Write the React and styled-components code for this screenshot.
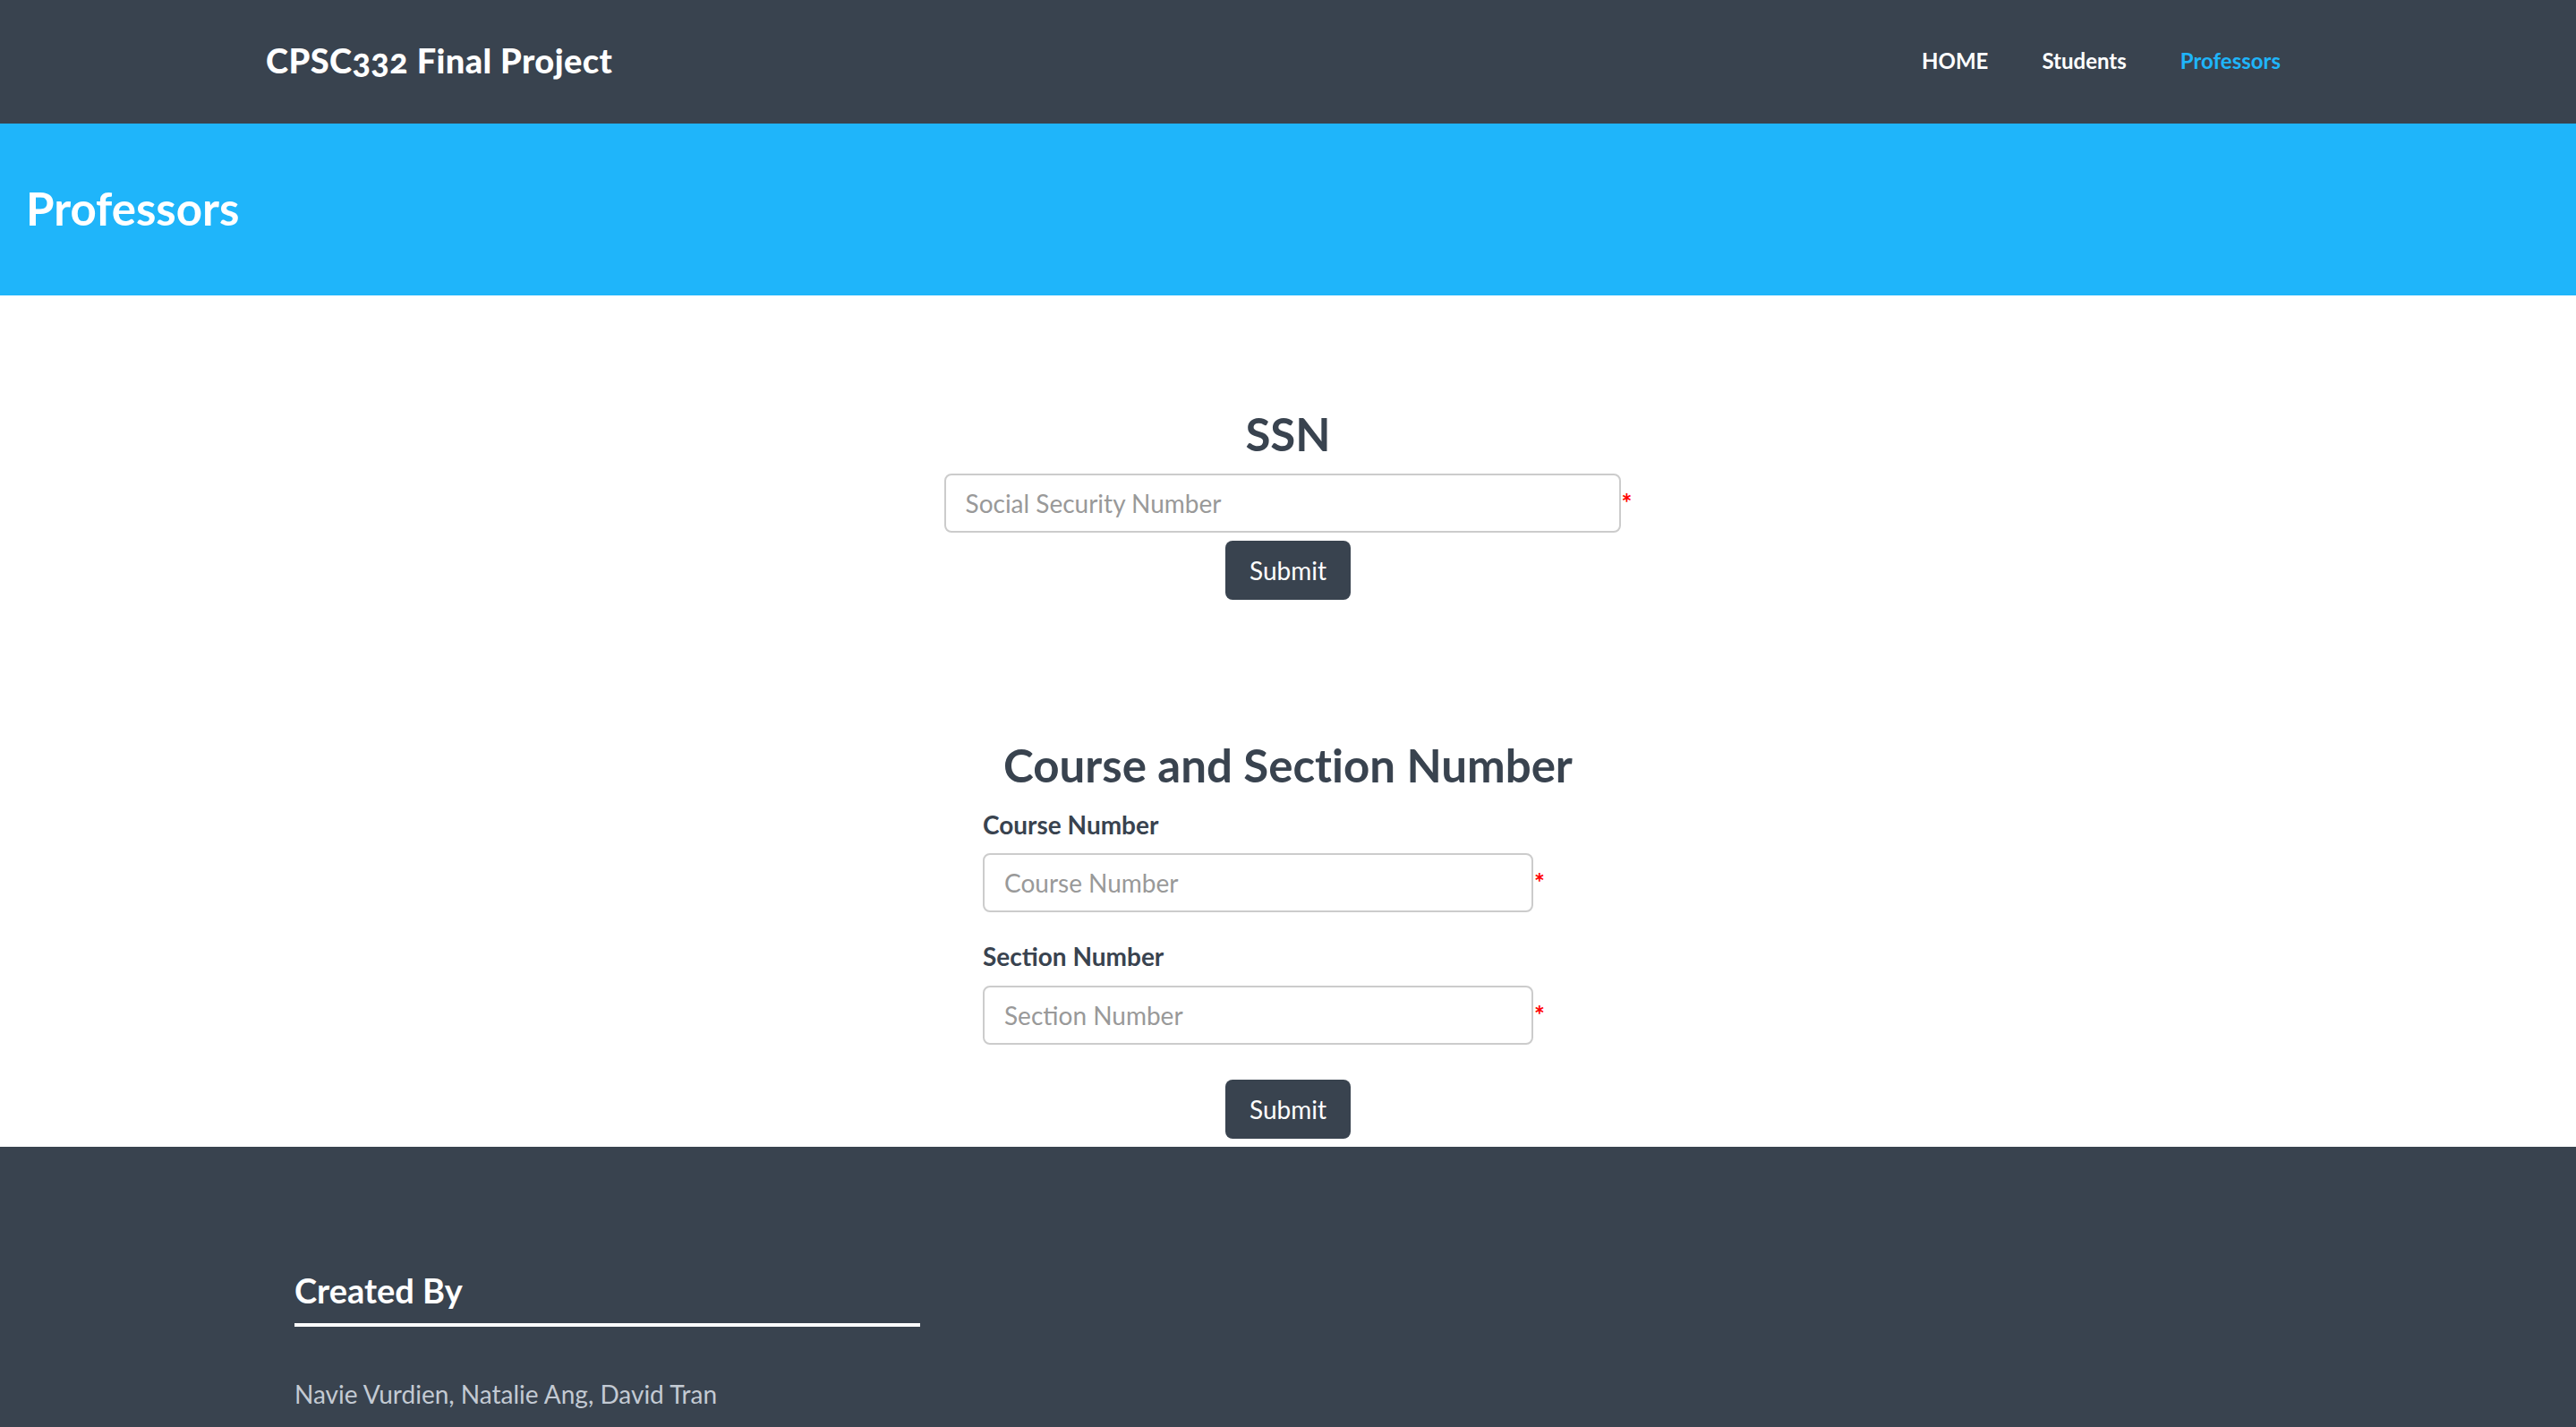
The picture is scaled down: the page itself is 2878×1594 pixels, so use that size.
import React from "react";
import styled, { createGlobalStyle } from "styled-components";

const GlobalStyle = createGlobalStyle`
  * {
    box-sizing: border-box;
  }
  body {
    margin: 0;
    font-family: Lato, "Open Sans", sans-serif;
    background: #ffffff;
  }
`;

const Nav = styled.nav`
  height: 138px;
  background: #39434f;
  display: flex;
  align-items: center;
  justify-content: space-between;
  padding: 0 330px 4px 297px;
`;

const Brand = styled.a`
  font-family: Lato, sans-serif;
  font-weight: 900;
  font-size: 38px;
  color: #ffffff;
  text-decoration: none;
  font-variant-numeric: oldstyle-nums;
  letter-spacing: 0.4px;
`;

const NavLinks = styled.ul`
  display: flex;
  gap: 60px;
  list-style: none;
  margin: 0;
  padding: 0;
`;

const NavLink = styled.a`
  font-size: 24px;
  font-weight: 700;
  color: ${(p) => (p.$active ? "#1fb5fa" : "#ffffff")};
  text-decoration: none;
`;

const Banner = styled.header`
  height: 192px;
  background: #1fb5fa;
  display: flex;
  align-items: center;
  padding: 0 0 3px 29px;
`;

const BannerTitle = styled.h1`
  margin: 0;
  font-size: 51px;
  font-weight: 700;
  color: #ffffff;
`;

const Main = styled.main`
  display: flex;
  flex-direction: column;
  align-items: center;
  padding-top: 125px;
`;

const Section = styled.form`
  display: flex;
  flex-direction: column;
  align-items: center;
  margin-top: ${(p) => p.$top || 0}px;
`;

const SectionTitle = styled.h2`
  margin: 0;
  font-size: 51px;
  line-height: 60px;
  font-weight: 700;
  color: #39434f;
  font-variant-ligatures: none;
`;

const FieldRow = styled.div`
  display: flex;
  align-items: flex-start;
  margin-top: ${(p) => p.$top || 0}px;
`;

const Input = styled.input`
  width: ${(p) => p.$width}px;
  height: 66px;
  border: 2px solid #cccccc;
  border-radius: 8px;
  padding: 0 22px;
  font-family: Lato, sans-serif;
  font-size: 28px;
  color: #333;
  outline: none;
  &::placeholder {
    color: #999999;
  }
`;

const Required = styled.span`
  color: #ff0000;
  font-size: 28px;
  font-weight: 700;
  line-height: 28px;
  margin-top: 18px;
  margin-left: 1px;
`;

const FieldGroup = styled.div`
  width: 682px;
  display: flex;
  flex-direction: column;
  margin-top: ${(p) => p.$top}px;
`;

const Label = styled.label`
  font-size: 28px;
  line-height: 34px;
  font-weight: 700;
  color: #39434f;
`;

const SubmitButton = styled.button`
  width: 140px;
  height: 66px;
  margin-top: ${(p) => p.$top}px;
  background: #39434f;
  color: #ffffff;
  border: none;
  border-radius: 8px;
  font-family: Lato, sans-serif;
  font-size: 28px;
  cursor: pointer;
`;

const Footer = styled.footer`
  margin-top: 9px;
  height: 313px;
  background: #39434f;
  padding: 137px 0 0 329px;
`;

const FooterTitle = styled.h3`
  margin: 0;
  width: 699px;
  font-size: 38px;
  line-height: 46px;
  font-weight: 700;
  color: #ffffff;
  padding-bottom: 14px;
  border-bottom: 4px solid #ffffff;
`;

const FooterText = styled.p`
  margin: 58px 0 0;
  font-size: 28px;
  line-height: 34px;
  color: #c3cad3;
`;

const App = () => {
  return (
    <>
      <GlobalStyle />
      <Nav>
        <Brand href="#">CPSC332 Final Project</Brand>
        <NavLinks>
          <li>
            <NavLink href="#">HOME</NavLink>
          </li>
          <li>
            <NavLink href="#">Students</NavLink>
          </li>
          <li>
            <NavLink href="#" $active>
              Professors
            </NavLink>
          </li>
        </NavLinks>
      </Nav>
      <Banner>
        <BannerTitle>Professors</BannerTitle>
      </Banner>
      <Main>
        <Section onSubmit={(e) => e.preventDefault()}>
          <SectionTitle>SSN</SectionTitle>
          <FieldRow $top={14}>
            <Input $width={756} placeholder="Social Security Number" />
            <Required>*</Required>
          </FieldRow>
          <SubmitButton $top={9}>Submit</SubmitButton>
        </Section>
        <Section $top={155} onSubmit={(e) => e.preventDefault()}>
          <SectionTitle>Course and Section Number</SectionTitle>
          <FieldGroup $top={19}>
            <Label>Course Number</Label>
            <FieldRow $top={15}>
              <Input $width={615} placeholder="Course Number" />
              <Required>*</Required>
            </FieldRow>
          </FieldGroup>
          <FieldGroup $top={32}>
            <Label>Section Number</Label>
            <FieldRow $top={16}>
              <Input $width={615} placeholder="Section Number" />
              <Required>*</Required>
            </FieldRow>
          </FieldGroup>
          <SubmitButton $top={39}>Submit</SubmitButton>
        </Section>
      </Main>
      <Footer>
        <FooterTitle>Created By</FooterTitle>
        <FooterText>Navie Vurdien, Natalie Ang, David Tran</FooterText>
      </Footer>
    </>
  );
};

export default App;
